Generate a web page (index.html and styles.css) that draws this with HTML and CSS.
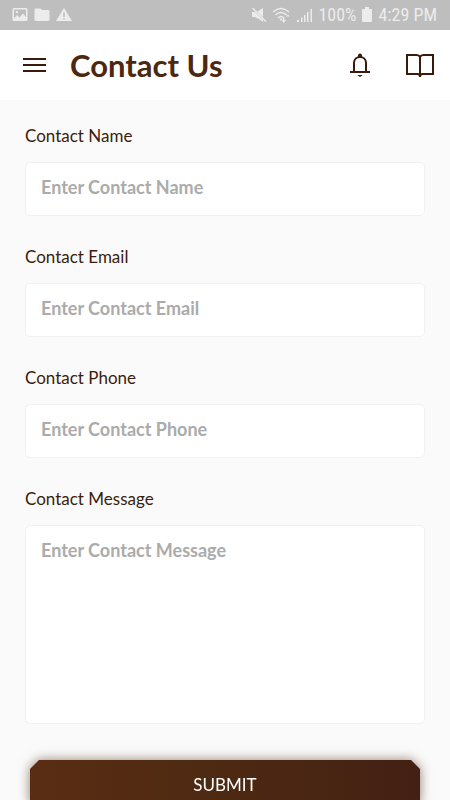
FILE: index.html
```html
<!DOCTYPE html>
<html lang="en">
<head>
<meta charset="utf-8">
<meta name="viewport" content="width=device-width, initial-scale=1">
<title>Contact Us</title>
<link rel="stylesheet" href="styles.css">
</head>
<body>
<div class="status">
  <div class="status-group notices">
    <svg width="16" height="16" viewBox="0 0 16 16"><path fill-rule="evenodd" d="M2 1h12a1.500 1.500 0 0 1 1.500 1.500v10a1.500 1.500 0 0 1-1.500 1.500H2a1.500 1.500 0 0 1-1.500-1.500v-10A1.500 1.500 0 0 1 2 1zM2 2.500v9l3-3.500 2.500 2.500 3.500-4 3 3.500v-7.500zM4 4h2v2H4z"/></svg>
    <svg width="16" height="16" viewBox="0 0 16 16"><path d="M1.500 1.500h5L8 3h6a1.500 1.500 0 0 1 1.500 1.500v8A1.500 1.500 0 0 1 14 14H2a1.500 1.500 0 0 1-1.500-1.500v-10a1 1 0 0 1 1-1z"/></svg>
    <svg width="16" height="16" viewBox="0 0 16 16"><path fill-rule="evenodd" d="M8 1l8 13H0zM7.200 5.500v4.500h1.600V5.500zM7.200 11v1.600h1.600V11z"/></svg>
  </div>
  <div class="status-group">
    <svg width="16" height="16" viewBox="0 0 16 16"><path d="M1 5h3l8 8v2L8 12 4 10H1zM6.500 4.500L12 1v9zM2 .500L15.500 14l-1 1L1 1.500z"/></svg>
    <svg width="20" height="16" viewBox="0 0 20 16"><g fill="none" stroke="#ececec" stroke-width="1.500"><path d="M1 5Q9-2 17 5M3.500 8Q9 3 14.500 8M6 11Q9 8 12 11"/></g><path d="M7.500 11.500h3L9 14zM11 11h1.500v2H14l-2.200 3-2.200-3H11zM16 7.500l2 2h-4z"/></svg>
    <svg width="16" height="16" viewBox="0 0 16 16"><path d="M0 13h2v2H0zM4 10.500h1.500V15H4zM7 8h1.500v7H7zM10 5h1.500v10H10zM13.500 2H15v13h-1.500z"/></svg>
    <span>100%</span>
    <svg width="12" height="16" viewBox="0 0 12 16"><path d="M4 0h4v2h2a1 1 0 0 1 1 1v11a1 1 0 0 1-1 1H2a1 1 0 0 1-1-1V3a1 1 0 0 1 1-1h2z"/></svg>
    <span>4:29 PM</span>
  </div>
</div>
<header class="appbar">
  <button class="icon-button" type="button" aria-label="Menu">
    <svg width="24" height="24" viewBox="0 0 24 24"><path d="M0 6h23M0 12h23M0 18h23" stroke-width="2"/></svg>
  </button>
  <h1>Contact Us</h1>
  <button class="icon-button" type="button" aria-label="Notifications">
    <svg width="22" height="26" viewBox="0 0 22 26"><path d="M1 20h20M5 20v-9C5 3 17 3 17 11v9" stroke-width="2"/><path class="solid" d="M9 5V3.500a2 2 0 0 1 4 0V5zM8.500 23h5q-2.500 3.500-5 0z"/></svg>
  </button>
  <button class="icon-button" type="button" aria-label="Guide">
    <svg width="28" height="26" viewBox="0 0 28 26"><path d="M14 5Q13 3 10.500 3H1v19h10.500q2.500 0 2.500 3 0-3 2.500-3H27V3h-9.500Q15 3 14 5zV25" stroke-width="2"/></svg>
  </button>
</header>
<main>
  <form>
    <div class="field">
      <label for="name">Contact Name</label>
      <input id="name" type="text" placeholder="Enter Contact Name">
    </div>
    <div class="field">
      <label for="email">Contact Email</label>
      <input id="email" type="email" placeholder="Enter Contact Email">
    </div>
    <div class="field">
      <label for="phone">Contact Phone</label>
      <input id="phone" type="tel" placeholder="Enter Contact Phone">
    </div>
    <div class="field">
      <label for="message">Contact Message</label>
      <textarea id="message" placeholder="Enter Contact Message"></textarea>
    </div>
    <div class="submit-shadow">
      <button class="submit" type="submit">SUBMIT</button>
    </div>
  </form>
</main>
</body>
</html>
```
FILE: styles.css
```css
* { box-sizing: border-box; }

html { scrollbar-width: none; }

body {
  margin: 0;
  background: #fafafa;
  color: #3a1d0a;
  font-family: "Google Sans", "Product Sans", Lato, sans-serif;
}

svg { display: block; flex: none; }

.status {
  display: flex;
  justify-content: space-between;
  align-items: center;
  height: 30px;
  padding: 0 13px 0 12px;
  background: #bebebe;
  color: #ececec;
  font: 18px/30px "Roboto Condensed", Roboto, sans-serif;
}

.status svg { fill: #ececec; }

.status-group {
  display: flex;
  align-items: center;
  gap: 5px;
}

.notices { gap: 6px; }

.appbar {
  display: flex;
  align-items: center;
  height: 70px;
  padding: 0 16px 0 23px;
  background: #fff;
}

.appbar h1 {
  flex: 1;
  margin: 0 0 0 23px;
  color: #4d2811;
  font-size: 31px;
  line-height: 40px;
  font-weight: 700;
}

.icon-button {
  padding: 0;
  border: 0;
  background: none;
  cursor: pointer;
}

.icon-button + .icon-button { margin-left: 35px; }

.icon-button svg {
  fill: none;
  stroke: #3a1a08;
}

.icon-button .solid {
  fill: #3a1a08;
  stroke: none;
}

form {
  display: flex;
  flex-direction: column;
  gap: 29px;
  padding: 24px 25px 32px;
}

.field {
  display: flex;
  flex-direction: column;
  gap: 14px;
}

label {
  font-size: 17px;
  line-height: 24px;
}

input,
textarea {
  display: block;
  width: 100%;
  height: 54px;
  padding: 0 15px 4px;
  border: 1px solid #f1f1f1;
  border-radius: 5px;
  background: #fff;
  color: #3a1d0a;
  font: 700 18px/24px "Google Sans", "Product Sans", Lato, sans-serif;
}

textarea {
  height: 199px;
  padding-top: 12px;
  resize: none;
}

::placeholder {
  color: #ababab;
  opacity: 1;
}

.submit-shadow {
  margin: 7px 5px 0;
  filter: drop-shadow(0 0 6px rgba(77, 40, 17, 0.6));
}

.submit {
  display: block;
  width: 100%;
  height: 50px;
  padding: 0;
  border: 0;
  background: linear-gradient(90deg, #5a2d13, #4e2a12 45%, #442014);
  clip-path: polygon(9px 0, calc(100% - 9px) 0, 100% 9px, 100% calc(100% - 9px), calc(100% - 9px) 100%, 9px 100%, 0 calc(100% - 9px), 0 9px);
  color: #fff;
  font: 17px/24px "Google Sans", "Product Sans", Lato, sans-serif;
  cursor: pointer;
}
```
